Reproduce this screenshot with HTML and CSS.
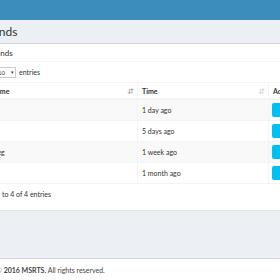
FILE: index.html
```html
<!DOCTYPE html>
<html>
<head>
<meta charset="utf-8">
<link rel="stylesheet" href="styles.css">
</head>
<body>
<header class="topbar"></header>
<section class="content-header"><h1 class="page-title">Friends</h1></section>
<section class="content">
  <div class="box">
    <div class="box-header"><h3 class="box-title">Friends</h3></div>
    <div class="box-body">
      <div class="length">Show <span class="select"><span class="select-val">10</span><span class="caret">▾</span></span> entries</div>
      <table class="grid">
        <thead>
          <tr>
            <th class="col-name"><div class="th-in"><span>Name</span><span class="sort sort-on">↓↑</span></div></th>
            <th class="col-time"><div class="th-in"><span>Time</span><span class="sort">↓↑</span></div></th>
            <th class="col-act"><div class="th-in"><span>Action</span></div></th>
          </tr>
        </thead>
        <tbody>
          <tr class="odd"><td>Jo</td><td>1 day ago</td><td><span class="btn">✎</span></td></tr>
          <tr><td>Al</td><td>5 days ago</td><td><span class="btn">✎</span></td></tr>
          <tr class="odd"><td>Meg</td><td>1 week ago</td><td><span class="btn">✎</span></td></tr>
          <tr><td>Li</td><td>1 month ago</td><td><span class="btn">✎</span></td></tr>
        </tbody>
      </table>
      <div class="info">Showing 1 to 4 of 4 entries</div>
    </div>
  </div>
</section>
<footer class="footer"><span class="copy">Copyright © <b>2016 MSRTS.</b> All rights reserved.</span></footer>
</body>
</html>
```
FILE: styles.css
```css
html, body {
  margin: 0;
  padding: 0;
  width: 280px;
  height: 280px;
  overflow: hidden;
  background: #ecf0f5;
  font-family: "Lato", "Liberation Sans", sans-serif;
  color: #333;
}
.topbar {
  height: 20px;
  background: #3c8dbc;
}
.content-header {
  height: 23px;
  display: flex;
  align-items: center;
}
.page-title {
  margin: 0 0 0 -21px;
  font-size: 12px;
  font-weight: 400;
  line-height: 1;
  white-space: nowrap;
}
.content {
  height: 215px;
}
.box {
  background: #fff;
  border-top: 1px solid #d2d6de;
  border-bottom: 1px solid #e3e6ea;
  margin-left: -40px;
  width: 420px;
  height: 166px;
}
.box-header {
  height: 17px;
  border-bottom: 1px solid #f4f4f4;
  display: flex;
  align-items: center;
}
.box-title {
  margin: 0 0 0 27px;
  font-size: 8px;
  font-weight: 400;
  line-height: 1;
}
.box-body {
  padding: 4px 0 0 26px;
}
.length {
  height: 12px;
  display: flex;
  align-items: center;
  gap: 3px;
  font-size: 7px;
  margin-left: -12px;
}
.select {
  display: flex;
  align-items: center;
  justify-content: space-between;
  width: 22px;
  height: 11px;
  box-sizing: border-box;
  border: 1px solid #ccc;
  padding: 0 1px 0 3px;
  font-size: 6px;
}
.caret {
  font-size: 5px;
  color: #333;
}
.grid {
  margin-top: 4px;
  border-collapse: collapse;
  font-size: 7px;
  table-layout: fixed;
}
.grid th, .grid td {
  border: 1px solid #f4f4f4;
  padding: 0 4px;
  text-align: left;
  white-space: nowrap;
  overflow: hidden;
}
.grid th {
  height: 15px;
  font-weight: 700;
  border-bottom: 2px solid #f4f4f4;
}
.grid td {
  height: 20px;
}
.col-name { width: 142px; }
.col-time { width: 122px; }
.col-act { width: 60px; }
.th-in {
  display: flex;
  justify-content: space-between;
  align-items: center;
}
.sort {
  font-size: 6px;
  color: #d0d0d0;
  letter-spacing: -2px;
  margin-right: 1px;
}
.sort-on {
  color: #999;
}
.grid tr.odd td {
  background: #f9f9f9;
}
.btn {
  display: inline-flex;
  align-items: center;
  justify-content: center;
  width: 20px;
  height: 14px;
  background: #00c0ef;
  color: #fff;
  border-radius: 2px;
  font-size: 6px;
  margin-left: -1px;
}
.info {
  font-size: 7px;
  padding-top: 6px;
  margin-left: -18px;
}
.footer {
  border-top: 1px solid #d2d6de;
  background: #fff;
  height: 22px;
  display: flex;
  align-items: center;
  font-size: 7px;
  color: #444;
}
.copy {
  margin-left: -36px;
  white-space: nowrap;
}
```
